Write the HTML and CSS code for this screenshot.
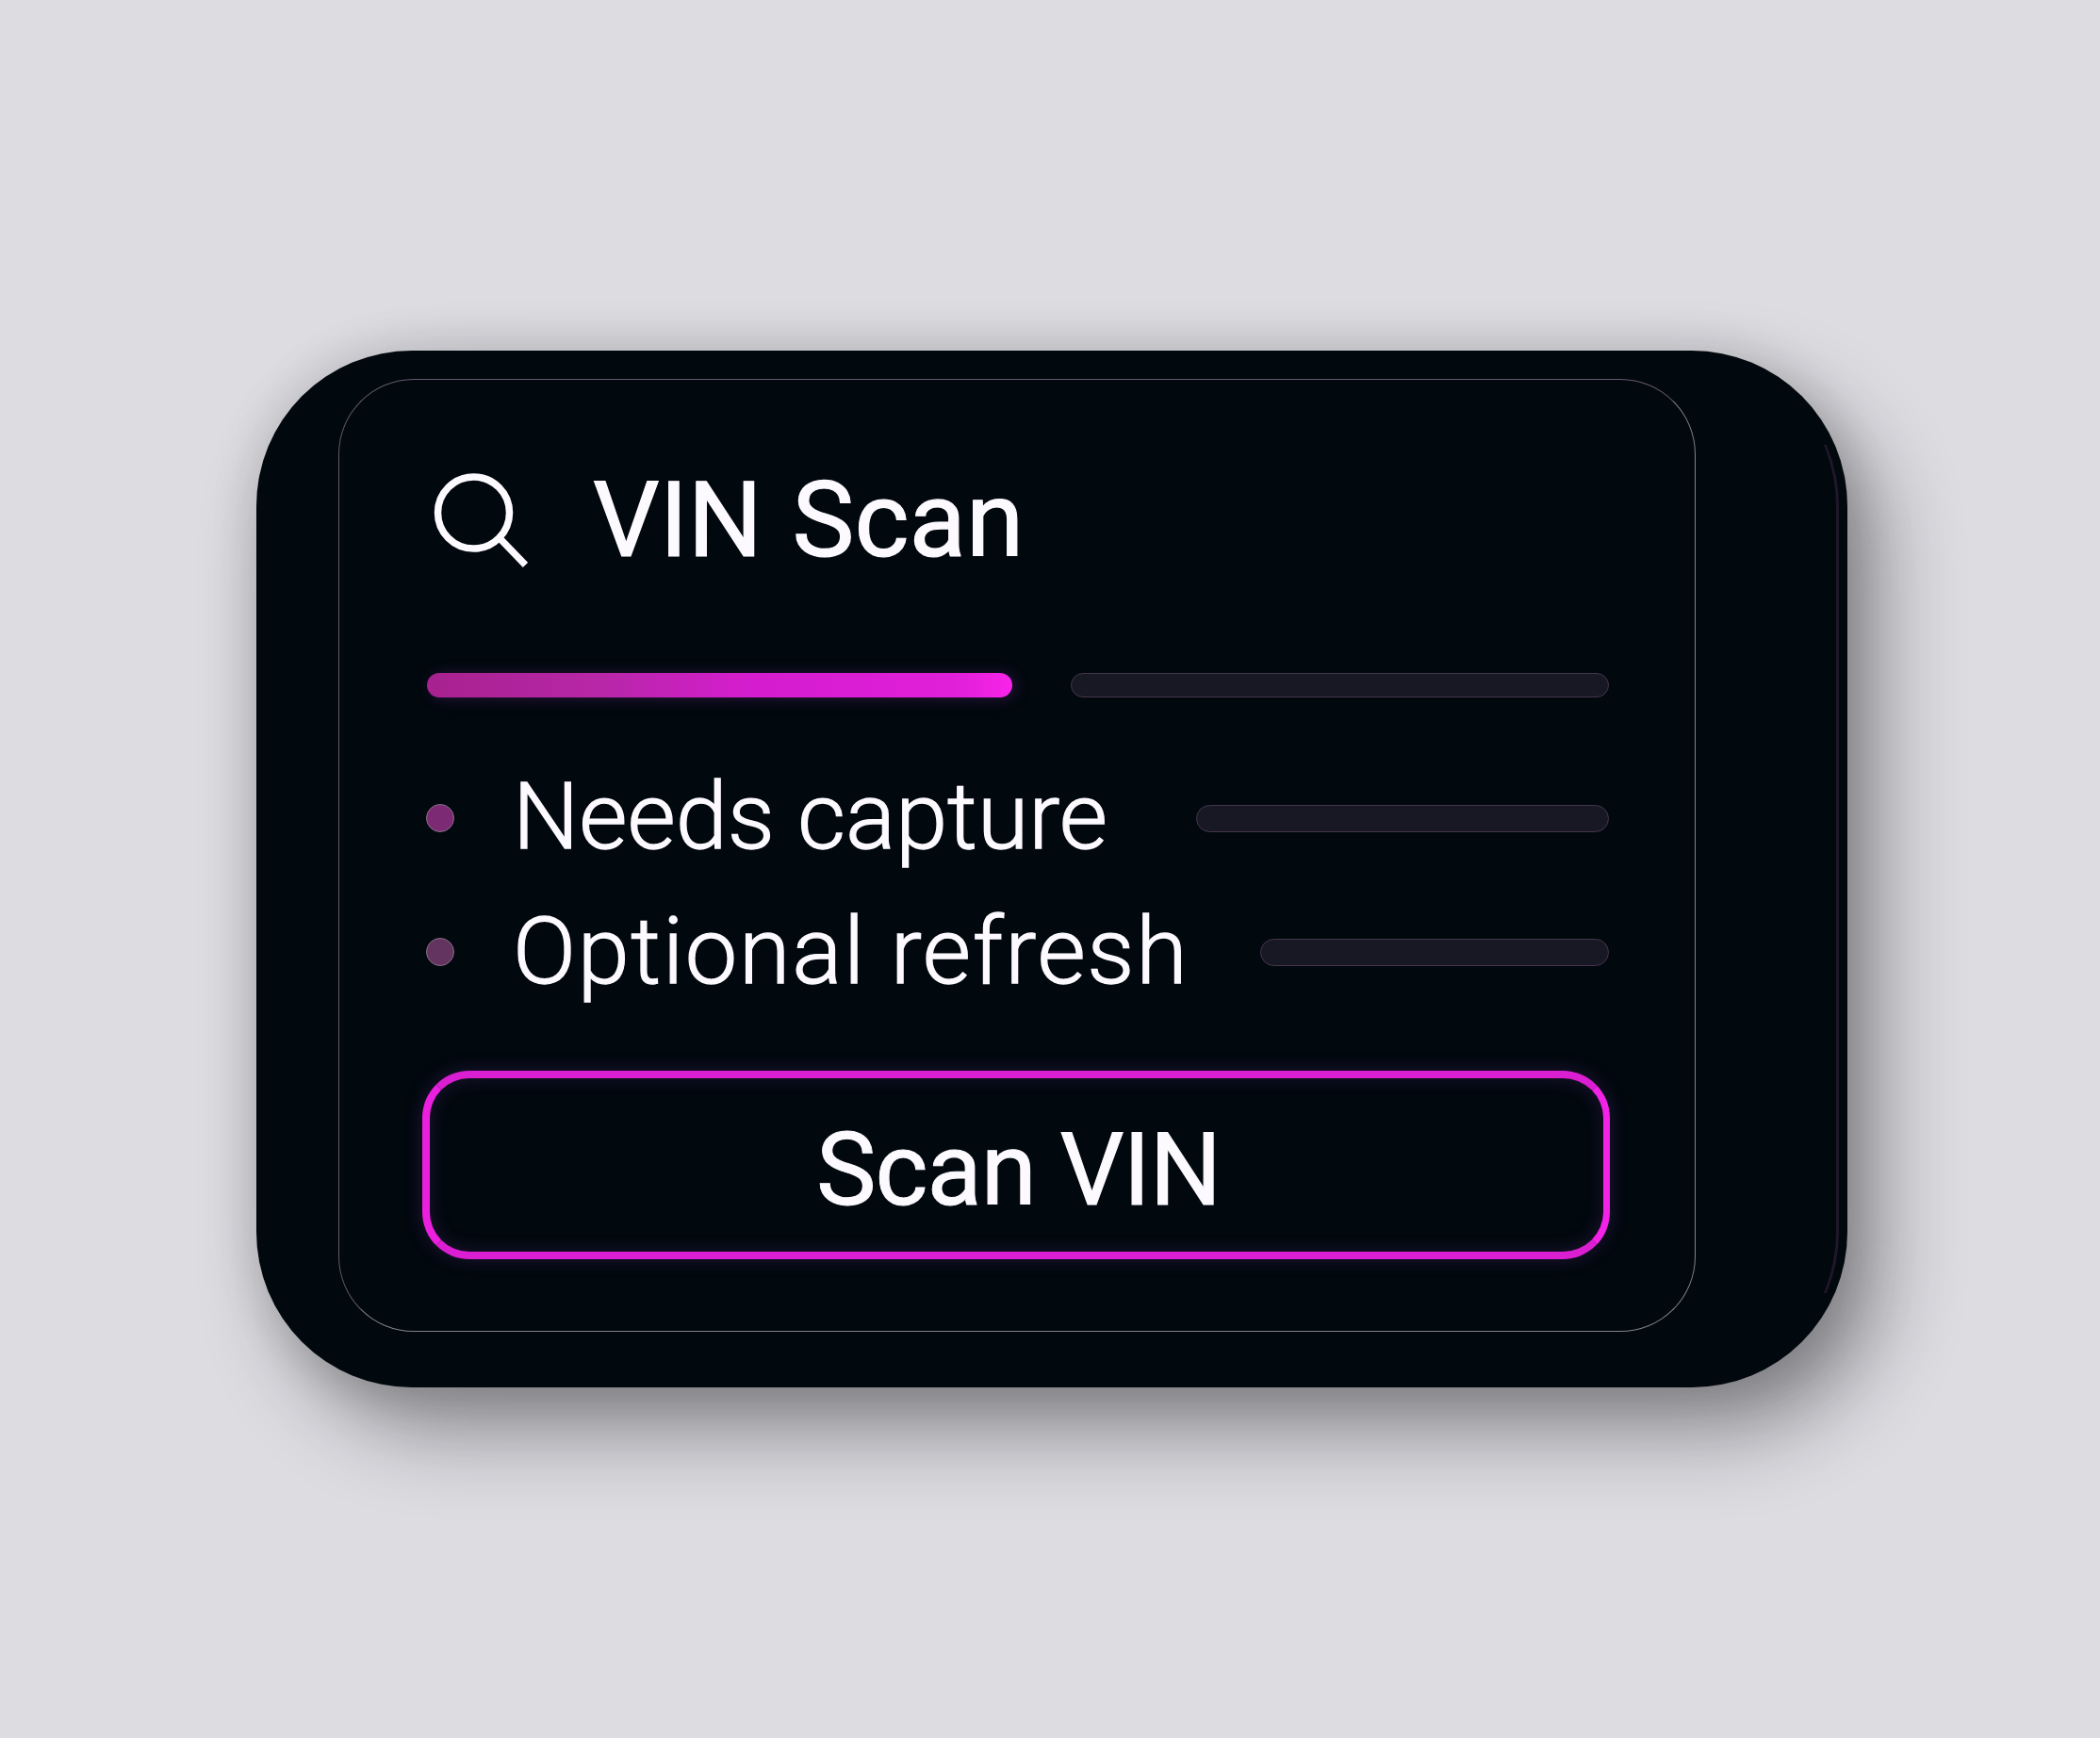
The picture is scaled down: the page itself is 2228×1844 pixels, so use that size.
FILE: index.html
```html
<!DOCTYPE html>
<html lang="en">
<head>
  <meta charset="UTF-8">
  <title>VIN Scan</title>
  <link rel="stylesheet" href="styles.css">
</head>
<body>

<div class="device">
  <div class="card">
    <div class="header">
      <svg class="search-icon" viewBox="0 0 108 108" fill="none" stroke="#fcf9ff">
        <circle cx="50.5" cy="49" r="38" stroke-width="7.5"/>
        <path d="M79 77L105.500 104.500" stroke-width="7.5"/>
      </svg>
      <h1>VIN Scan</h1>
    </div>

    <div class="progress">
      <div class="bar bar-active"></div>
      <div class="bar bar-rest"></div>
    </div>

    <ul class="list">
      <li>
        <span class="dot"></span>
        <span class="label label-needs">Needs capture</span>
        <span class="bar bar-long"></span>
      </li>
      <li>
        <span class="dot dot-dim"></span>
        <span class="label label-optional">Optional refresh</span>
        <span class="bar bar-short"></span>
      </li>
    </ul>

    <button class="scan-btn">Scan VIN</button>
  </div>
</div>

</body>
</html>
```
FILE: styles.css
```css
* {
  box-sizing: border-box;
}
body {
  margin: 0;
  height: 1844px;
  padding: 372px 0 0 272px;
  background: #dddce1;
  font-family: Roboto, "Liberation Sans", sans-serif;
  color: #fcf9ff;
  overflow: hidden;
}
.device {
  position: relative;
  width: 1688px;
  height: 1100px;
  padding: 30px 0 0 87px;
  background: #01080e;
  border-radius: 165px;
  box-shadow: 32px 44px 88px rgba(20, 20, 23, 0.44), 0 0 50px rgba(20, 20, 23, 0.14);
}
/* thin reflection along the right edge */
.device::after {
  content: "";
  position: absolute;
  inset: 0 9px 0 auto;
  width: 165px;
  border-right: 3px solid #21172a;
  border-radius: 0 165px 165px 0;
  clip-path: inset(100px 0);
}
.card {
  width: 1440px;
  height: 1011px;
  padding: 86px 91px 0 88px;
  border: 1px solid #85828c;
  border-top-color: #66596e;
  border-left-color: #66596e;
  border-radius: 80px;
}
.header {
  display: flex;
  align-items: center;
  height: 120px;
}
.search-icon {
  width: 108px;
  height: 108px;
  margin: 0 0 1px 4px;
}
h1 {
  margin: 6px 0 0 69px;
  font-size: 111px;
  font-weight: 400;
  line-height: 120px;
  word-spacing: 4px;
  white-space: nowrap;
  -webkit-text-stroke: 1.2px #fcf9ff;
}
.progress {
  display: flex;
  justify-content: space-between;
  align-items: center;
  height: 26px;
  margin: 105px 0 0 5px;
}
.bar {
  height: 29px;
  background: #171824;
  border: 1px solid #45364c;
  border-radius: 15px;
}
.bar-active {
  width: 621px;
  height: 26px;
  border: none;
  background: linear-gradient(90deg, #a7218f, #b827a8 30%, #d41dce 55%, #e01fd9 90%, #f824e9);
  box-shadow: 4px 1px 16px rgba(160, 60, 190, 0.25);
}
.bar-rest {
  width: 571px;
  height: 26px;
}
.list {
  margin: 57px 0 0 4px;
  padding: 0;
  list-style: none;
}
.list li {
  display: flex;
  align-items: center;
  height: 142px;
}
.dot {
  width: 30px;
  height: 30px;
  background: #7d2a74;
  border: 1px solid #887088;
  border-radius: 50%;
}
.dot-dim {
  background: #63345f;
}
.label {
  margin: 0 0 5px 62px;
  font-size: 99px;
  font-weight: 300;
  line-height: 120px;
  white-space: nowrap;
  -webkit-text-stroke: 1.3px #fcf9ff;
}
.label-needs {
  letter-spacing: 0;
}
.label-optional {
  margin-bottom: 2px;
  letter-spacing: 1.7px;
}
.list .bar {
  margin-left: auto;
}
.bar-long {
  width: 438px;
}
.bar-short {
  width: 370px;
}
.scan-btn {
  display: block;
  width: 1260px;
  height: 200px;
  margin-top: 55px;
  padding: 11px 0 0 4px;
  background: transparent;
  border: 8px solid #d91fd1;
  border-left-color: #ea20de;
  border-right: 7px solid #f222e7;
  border-radius: 50px;
  box-shadow: 0 0 20px rgba(150, 70, 190, 0.22), inset 0 0 20px rgba(150, 70, 190, 0.2);
  color: inherit;
  font-family: inherit;
  font-size: 107px;
  font-weight: 400;
  letter-spacing: -1px;
  -webkit-text-stroke: 1px #fcf9ff;
}
```
